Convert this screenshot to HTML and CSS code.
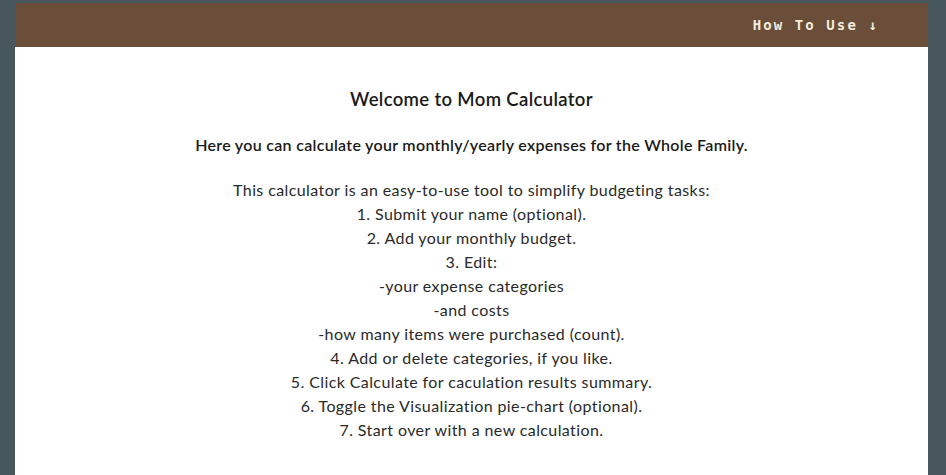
FILE: index.html
```html
<!DOCTYPE html>
<html>
<head>
<meta charset="utf-8">
<link rel="stylesheet" href="styles.css">
</head>
<body>
<div class="page">
  <header class="topbar">
    <a class="howto" href="#">How To Use ↓</a>
  </header>
  <main class="content">
    <h1 class="title">Welcome to Mom Calculator</h1>
    <h2 class="subtitle">Here you can calculate your monthly/yearly expenses for the Whole Family.</h2>
    <div class="steps">
      <p>This calculator is an easy-to-use tool to simplify budgeting tasks:</p>
      <p>1. Submit your name (optional).</p>
      <p>2. Add your monthly budget.</p>
      <p>3. Edit:</p>
      <p>-your expense categories</p>
      <p>-and costs</p>
      <p>-how many items were purchased (count).</p>
      <p>4. Add or delete categories, if you like.</p>
      <p>5. Click Calculate for caculation results summary.</p>
      <p>6. Toggle the Visualization pie-chart (optional).</p>
      <p>7. Start over with a new calculation.</p>
    </div>
  </main>
</div>
</body>
</html>
```
FILE: styles.css
```css
html, body {
  margin: 0;
  padding: 0;
  background: #48565d;
  height: 100%;
}
body {
  font-family: Lato, "Noto Sans", sans-serif;
  color: #222;
}
.page {
  margin: 3px 18px 0 15px;
  background: #ffffff;
  min-height: 472px;
}
.topbar {
  background: #6b4e3a;
  height: 44px;
  display: flex;
  align-items: center;
  justify-content: flex-end;
  padding-right: 49px;
}
.howto {
  font-family: "DejaVu Sans Mono", monospace;
  font-weight: bold;
  font-size: 14px;
  letter-spacing: 2.1px;
  color: #f4ecdc;
  text-decoration: none;
}
.content {
  text-align: center;
  padding-top: 40px;
}
.title {
  font-size: 18.5px;
  font-weight: 600;
  letter-spacing: 0.35px;
  margin: 0;
  line-height: 24px;
  color: #1a1a1a;
}
.subtitle {
  font-size: 16px;
  font-weight: 600;
  letter-spacing: 0.3px;
  margin: 22px 0 0 0;
  line-height: 24px;
  color: #1a1a1a;
}
.steps {
  margin-top: 21px;
  font-size: 16px;
  letter-spacing: 0.4px;
  line-height: 24px;
  color: #2a2a2a;
}
.steps p {
  margin: 0;
}
```
